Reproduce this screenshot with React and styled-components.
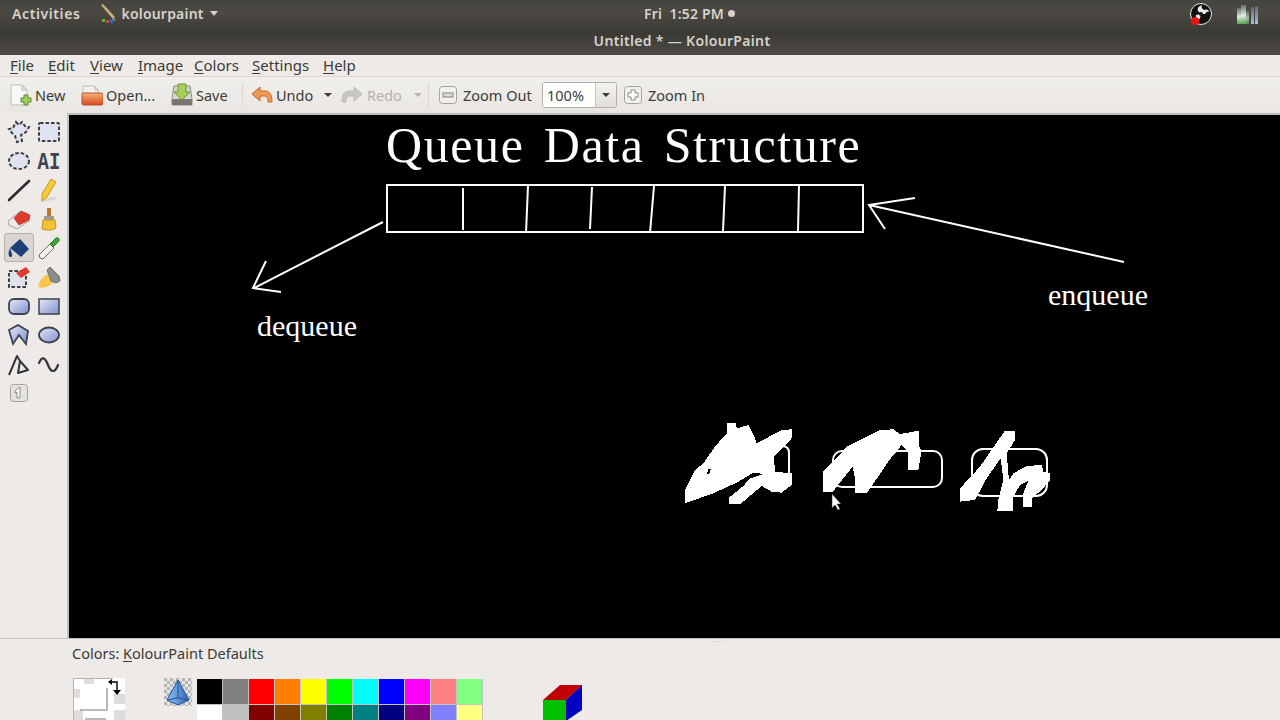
import React from 'react';
import styled, { createGlobalStyle } from 'styled-components';

const GlobalStyle = createGlobalStyle`
  html, body { margin: 0; padding: 0; background: #edeae7; }
  * { box-sizing: border-box; }
`;

const uiFont = `"Noto Sans", "Open Sans", sans-serif`;

const Page = styled.div`
  width: 1280px;
  height: 720px;
  overflow: hidden;
  display: flex;
  flex-direction: column;
  font-family: ${uiFont};
  background: #edeae7;
  color: #3c3b37;
`;

const Chrome = styled.div`
  height: 55px;
  flex: none;
  background: linear-gradient(#45433e 0, #4c4943 12px, #3f3d38 28px, #3c3a35 34px, #4d4a44 55px);
  color: #d6d3cc;
  font-weight: 600;
`;

const TopBar = styled.div`
  height: 27px;
  display: grid;
  grid-template-columns: 644px auto 1fr;
  align-items: center;
  font-size: 14px;
  letter-spacing: 0.15px;
`;

const TopLeft = styled.div`
  display: flex;
  align-items: center;
  padding-left: 12px;
`;

const Activities = styled.span`
  letter-spacing: 0.6px;
`;

const AppMenu = styled.div`
  display: flex;
  align-items: center;
  gap: 3px;
  margin-left: 20px;
  & > span:nth-child(2) { letter-spacing: 0.2px; }
`;

const Caret = styled.span`
  width: 0;
  height: 0;
  margin-left: ${p => p.$left ?? 3}px;
  border-left: 4.5px solid transparent;
  border-right: 4.5px solid transparent;
  border-top: ${p => p.$h || 5}px solid ${p => p.$color || '#d6d3cc'};
`;

const Clock = styled.div`
  display: flex;
  align-items: center;
  gap: 4px;
  white-space: pre;
`;

const Dot = styled.span`
  width: 7px;
  height: 7px;
  border-radius: 50%;
  background: #d6d3cc;
`;

const Tray = styled.div`
  display: flex;
  justify-content: flex-end;
  align-items: center;
  gap: 24px;
  padding-right: 21px;
`;

const LevelsSvg = styled.svg`
  filter: blur(0.5px);
`;

const WindowTitle = styled.div`
  height: 28px;
  padding: 0 0 1px 84px;
  display: flex;
  align-items: center;
  justify-content: center;
  font-size: 14px;
  letter-spacing: 0.33px;
`;

const MenuBar = styled.div`
  height: 22px;
  flex: none;
  display: flex;
  align-items: center;
  padding: 0 0 2px 10px;
  font-size: 15px;
  border-bottom: 1px solid #d8d5d1;
`;

const MenuItem = styled.span`
  width: ${p => p.$width}px;
  flex: none;
`;

const Mnemonic = styled.span`
  text-decoration: underline;
  text-underline-offset: 2px;
`;

const ToolBar = styled.div`
  height: 36px;
  flex: none;
  display: flex;
  align-items: center;
  padding-left: 10px;
  font-size: 14.5px;
  background: linear-gradient(#f1efec, #e9e6e2);
`;

const ToolButton = styled.div`
  width: ${p => p.$width}px;
  flex: none;
  display: flex;
  align-items: center;
  gap: ${p => p.$gap ?? 3}px;
  color: ${p => (p.$disabled ? '#b5b2ae' : '#3c3b37')};
`;

const Separator = styled.div`
  width: 1px;
  height: 24px;
  flex: none;
  margin-right: ${p => p.$right}px;
  background: #d8d5d0;
`;

const ZoomCombo = styled.div`
  width: 75px;
  height: 26px;
  flex: none;
  display: grid;
  grid-template-columns: 53px 1fr;
  align-items: stretch;
  margin-right: 7px;
  border: 1px solid #b3afa9;
  border-radius: 3px;
  overflow: hidden;
`;

const ZoomValue = styled.div`
  display: flex;
  align-items: center;
  padding-left: 4px;
  background: #fff;
  border-right: 1px solid #c8c5c0;
`;

const ZoomArrow = styled.div`
  display: flex;
  align-items: center;
  justify-content: center;
  background: linear-gradient(#f4f2ef, #e2dfdb);
  & > span { margin: 0; }
`;

const Body = styled.div`
  flex: 1;
  min-height: 0;
  display: flex;
  border-top: 2px solid #c3c0bc;
`;

const ToolBox = styled.div`
  width: 69px;
  flex: none;
  margin-top: -2px;
  padding: 4px 0 0 4px;
  background: #edeae7;
  border-right: 2px solid #c3c0bc;
  display: grid;
  grid-template-columns: 30px 30px;
  grid-auto-rows: 29px;
  align-content: start;
`;

const ToolCell = styled.div`
  display: flex;
  align-items: center;
  justify-content: center;
  border-radius: 3px;
  ${p => p.$active && `
    background: #d9d6d2;
    border: 1px solid #b5b2ad;
  `}
`;

const SharedDefs = styled.svg`
  position: absolute;
`;

const Stage = styled.div`
  flex: 1;
  position: relative;
  background: #000;
  overflow: hidden;
`;

const Drawing = styled.svg`
  display: block;
  width: 100%;
  height: 100%;
`;

const CanvasLabel = styled.div`
  position: absolute;
  left: ${p => p.$x}px;
  top: ${p => p.$y}px;
  color: #fff;
  font-family: "Liberation Serif", "DejaVu Serif", serif;
  font-size: ${p => p.$size}px;
  line-height: 1;
  white-space: pre;
  letter-spacing: ${p => p.$track || 0}px;
  word-spacing: ${p => p.$words || 0}px;
`;

const ColorPanel = styled.div`
  height: 82px;
  flex: none;
  padding-left: 69px;
  background: #edeae7;
  border-top: 1px solid #c3c0bc;
  position: relative;
`;

const GripDots = styled.div`
  position: absolute;
  left: 708px;
  top: 1px;
  width: 18px;
  height: 3px;
  background-image: radial-gradient(#c9c6c1 0.8px, transparent 1px);
  background-size: 3px 3px;
`;

const PanelLabel = styled.div`
  padding: 4px 0 0 3px;
  height: 39px;
  font-size: 14.5px;
`;

const PaletteRow = styled.div`
  display: flex;
  align-items: flex-start;
`;

const ColorWell = styled.svg`
  flex: none;
  margin: 0 39px 0 4px;
`;

const ColorCone = styled.svg`
  flex: none;
`;

const Swatches = styled.div`
  flex: none;
  width: 286px;
  margin: 1px 60px 0 5px;
  display: grid;
  grid-template-columns: repeat(11, 26px);
  grid-auto-rows: 26px;
  background: #bdbab6;
`;

const Swatch = styled.div`
  background: ${p => p.$color};
  border-right: 1px solid #c5c3c0;
  border-bottom: 1px solid #c5c3c0;
`;

const ColorCube = styled.svg`
  flex: none;
  margin-top: 7px;
`;

const Ul = ({ children, rest, width }) => (
  <MenuItem $width={width}><Mnemonic>{children}</Mnemonic>{rest}</MenuItem>
);

const NewIcon = () => (
  <svg width="22" height="24" viewBox="0 0 22 24">
    <path d="M1 2h11l5 5v15H1z" fill="#f8f8f6" stroke="#bdbcb8" />
    <path d="M12 2v5h5z" fill="#dcdcd8" stroke="#bdbcb8" />
    <path d="M11 15h3v-3h4v3h3v4h-3v3h-4v-3h-3z" fill="#9ccb5f" stroke="#5f8c2e" />
  </svg>
);

const OpenIcon = () => (
  <svg width="22" height="24" viewBox="0 0 22 24">
    <path d="M2 3h11l4 4v4H2z" fill="#f2f1ee" stroke="#c0bdb8" />
    <path d="M14 3v4h4" fill="none" stroke="#c0bdb8" />
    <rect x="1" y="10" width="21" height="12" rx="1.5" fill="url(#openFill)" stroke="#b9512a" />
    <defs>
      <linearGradient id="openFill" x1="0" y1="0" x2="0" y2="1">
        <stop offset="0" stopColor="#f6b27a" />
        <stop offset="1" stopColor="#d9481c" />
      </linearGradient>
    </defs>
  </svg>
);

const SaveIcon = () => (
  <svg width="22" height="24" viewBox="0 0 22 24">
    <path d="M3 3h16l2 13v6H1v-6z" fill="#d6d5d0" stroke="#8d8c88" />
    <rect x="1" y="16" width="20" height="6" rx="1" fill="#77766f" />
    <path d="M7 1h8v8h4l-8 8-8-8h4z" fill="#a6cf5b" stroke="#6d9a2c" />
  </svg>
);

const UndoIcon = () => (
  <svg width="22" height="20" viewBox="0 0 22 20">
    <path d="M1 9 9 2v4h5c5 0 7 4 7 11h-4c0-4-1-6-4-6H9v5z" fill="#ee9a55" stroke="#c9662a" />
  </svg>
);

const RedoIcon = () => (
  <svg width="22" height="20" viewBox="0 0 22 20">
    <path d="M21 9 13 2v4H8c-5 0-7 4-7 11h4c0-4 1-6 4-6h4v5z" fill="#c9c7c3" stroke="#bdbbb7" />
  </svg>
);

const ZoomIcon = ({ plus }) => (
  <svg width="18" height="18" viewBox="0 0 18 18">
    <rect x="0.5" y="0.5" width="17" height="17" rx="3" fill="#f2f0ed" stroke="#a5a29d" />
    {plus
      ? <path d="M7 4h4v3h3v4h-3v3H7v-3H4V7h3z" fill="#fff" stroke="#8a8782" />
      : <rect x="4" y="7" width="10" height="4" fill="#dcdad6" stroke="#8a8782" />}
  </svg>
);

const PaintBrushLogo = () => (
  <svg width="18" height="20" viewBox="0 0 18 20">
    <path d="M1 1 3 0l12 13-2 2z" fill="#c9b184" />
    <path d="M13 13l3 3-2 1-2-2z" fill="#8c8a85" />
    <rect x="2" y="15" width="3" height="3" fill="#62b043" />
    <rect x="6" y="16" width="3" height="3" fill="#c84a3c" />
    <rect x="10" y="16" width="3" height="3" fill="#3d67c9" />
  </svg>
);

const ObsIcon = () => (
  <svg width="24" height="24" viewBox="0 0 24 24">
    <circle cx="12" cy="12" r="10.5" fill="#111" stroke="#e8e8e8" strokeWidth="1" />
    <path d="M12 12 9 9C8 6 10 4 13 3c-1 2 0 4 2 5 2-1 4-1 6 2-2-1-4 0-5 2zM12 12l-1 4c-1 2-3 3-6 2 2-1 2-3 2-5z" fill="#e8e8e8" />
    <circle cx="12" cy="12" r="2" fill="#111" />
    <circle cx="6" cy="19" r="4" fill="#f01010" />
  </svg>
);

const LevelsIcon = () => (
  <LevelsSvg width="22" height="20" viewBox="0 0 22 20">
    <defs>
      <linearGradient id="lvA" x1="0" y1="0" x2="0" y2="1">
        <stop offset="0" stopColor="#6b6e68" />
        <stop offset="0.55" stopColor="#dcebe0" />
        <stop offset="1" stopColor="#57a650" />
      </linearGradient>
      <linearGradient id="lvB" x1="0" y1="0" x2="0" y2="1">
        <stop offset="0" stopColor="#62656a" />
        <stop offset="1" stopColor="#a9c2dc" />
      </linearGradient>
    </defs>
    <rect x="0" y="4" width="4" height="16" fill="url(#lvA)" />
    <rect x="4" y="1" width="5" height="19" fill="url(#lvA)" />
    <rect x="9" y="7" width="3" height="13" fill="url(#lvA)" opacity="0.7" />
    <rect x="14" y="3" width="3" height="17" fill="url(#lvB)" />
    <rect x="18" y="2" width="3" height="18" fill="url(#lvB)" />
  </LevelsSvg>
);

const dash = { fill: '#dfe2f0', stroke: '#3d3f44', strokeWidth: 2, strokeDasharray: '3.5 2' };
const shape = { fill: 'url(#toolFill)', stroke: '#3d4250', strokeWidth: 1.8 };

const toolIcons = [
  <path d="M9 2l3 3 3-3 3 4 4 1-3 5-5 3 1 6-5 1-2-6-3-3-3-4 4-1z" {...dash} />,
  <rect x="2" y="3" width="20" height="18" rx="1" {...dash} />,
  <ellipse cx="12" cy="12" rx="10" ry="8" {...dash} />,
  <text
    transform="translate(0.5 20) scale(1 1.3)"
    fontSize="19"
    fontWeight="700"
    fontFamily="'Liberation Mono', monospace"
    fill="#3f444a"
  >
    AI
  </text>,
  <path d="M2 22 22 3" stroke="#2d2d30" strokeWidth="2.6" strokeLinecap="round" />,
  <g>
    <path d="M4 23l15-3" stroke="#dcd9d5" strokeWidth="3" />
    <path d="M14 1l5 3-9 15-5 4 0-7z" fill="#f5c93c" stroke="#c79a1c" />
  </g>,
  <g>
    <path d="M1 14 12 5l10 5v4L10 22l-8-4z" fill="#ecebe8" stroke="#a9a6a2" />
    <path d="M7 11 14 4l9 4-1 5-10 5z" fill="#de3b2b" stroke="#b92a1e" strokeWidth="0.7" />
  </g>,
  <g>
    <path d="M10 1h4v9h-4z" fill="#b97a2c" />
    <rect x="7" y="9" width="10" height="4" fill="#9f9b92" />
    <path d="M6 13h12l1 8c-4 3-11 2-14 1z" fill="#f4c232" stroke="#c7901c" />
  </g>,
  <g>
    <path d="M3 12 13 3l9 10-8 8-6-5z" fill="#1e3f78" />
    <path d="M3 12c-1 3-2 5-1 8 1 2 4 1 3-2z" fill="#1e3f78" />
  </g>,
  <g>
    <path d="M3 22l-1-3L13 8l4 4L6 23z" fill="#f1f0ed" stroke="#6b6b6b" />
    <path d="M13 8l6-6c2-1 4 1 3 3l-6 6z" fill="#3aa63c" stroke="#24752a" />
  </g>,
  <g>
    <rect x="2" y="6" width="17" height="16" {...dash} fill="#dfe2ea" />
    <path d="M9 8l10-6 4 5-9 6z" fill="#e23a2c" />
  </g>,
  <g>
    <path d="M1 22c1-6 5-11 10-13l6 7c-3 5-10 8-16 6z" fill="#f8c64a" />
    <path d="M10 5l3-3 9 9 1 5-4 2-5-2z" fill="#8b8d8e" stroke="#6f7172" />
  </g>,
  <rect x="2" y="5" width="20" height="15" rx="5" {...shape} />,
  <rect x="2" y="5" width="20" height="15" {...shape} strokeWidth="1.5" />,
  <path d="M2 7l9-5 10 6-2 13-7-9-6 9z" {...shape} />,
  <ellipse cx="12" cy="12" rx="10" ry="7.5" {...shape} />,
  <path d="M2 23 10 4l3 5-2 12 10-3-8-9" fill="none" stroke="#33363c" strokeWidth="2" strokeLinejoin="round" />,
  <path d="M2 11c3-7 6-6 9 2s7 8 10 0" fill="none" stroke="#33363c" strokeWidth="2.2" strokeLinecap="round" />,
];

const ToolIcon = ({ children }) => (
  <svg width="24" height="24" viewBox="0 0 24 24">{children}</svg>
);

const row1 = ['#000000', '#808080', '#ff0000', '#ff8000', '#ffff00', '#00ff00', '#00ffff', '#0000ff', '#ff00ff', '#ff8080', '#80ff80'];
const row2 = ['#ffffff', '#c0c0c0', '#800000', '#804000', '#808000', '#008000', '#008080', '#000080', '#800080', '#8080ff', '#ffff80'];

const scribbles = [
  'M45 240 75 180 100 160 135 110 170 70 172 38 197 38 200 55 235 45 255 85 260 100 335 60 365 58 365 85 312 140 315 185 365 190 365 225 335 248 305 245 275 228 210 283 178 283 178 262 220 228 240 205 282 192 250 188 200 218 130 250 45 280Z M115 178 122 178 118 192 110 192Z',
  'M460 185 495 150 530 110 570 90 630 60 670 58 690 72 748 62 748 110 755 122 745 180 715 180 715 125 695 105 660 148 590 250 555 250 555 205 548 170 500 230 490 245 460 245Z',
  'M870 235 930 170 985 90 1005 62 1035 62 1035 90 1010 130 1017 210 1030 190 1070 168 1115 165 1120 185 1140 190 1140 210 1115 240 1085 265 1085 292 1060 292 1060 250 1075 212 1050 225 1030 260 1030 303 982 303 985 270 1000 210 992 145 950 205 915 270 870 275Z',
];

const App = () => (
  <Page>
    <GlobalStyle />
    <Chrome>
      <TopBar>
        <TopLeft>
          <Activities>Activities</Activities>
          <AppMenu>
            <PaintBrushLogo />
            <span>kolourpaint</span>
            <Caret />
          </AppMenu>
        </TopLeft>
        <Clock>
          <span>Fri  1:52 PM</span>
          <Dot />
        </Clock>
        <Tray>
          <ObsIcon />
          <LevelsIcon />
        </Tray>
      </TopBar>
      <WindowTitle>Untitled * — KolourPaint</WindowTitle>
    </Chrome>

    <MenuBar>
      <Ul width={38} rest="ile">F</Ul>
      <Ul width={42} rest="dit">E</Ul>
      <Ul width={48} rest="iew">V</Ul>
      <Ul width={56} rest="mage">I</Ul>
      <Ul width={58} rest="olors">C</Ul>
      <Ul width={71} rest="ettings">S</Ul>
      <Ul width={40} rest="elp">H</Ul>
    </MenuBar>

    <ToolBar>
      <ToolButton $width={71}><NewIcon /><span>New</span></ToolButton>
      <ToolButton $width={90}><OpenIcon /><span>Open...</span></ToolButton>
      <ToolButton $width={71}><SaveIcon /><span>Save</span></ToolButton>
      <Separator $right={8} />
      <ToolButton $width={90}>
        <UndoIcon /><span>Undo</span><Caret $color="#3c3b37" $h={4} $left={8} />
      </ToolButton>
      <ToolButton $width={87} $disabled $gap={4}>
        <RedoIcon /><span>Redo</span><Caret $color="#b5b2ae" $h={4} $left={8} />
      </ToolButton>
      <Separator $right={10} />
      <ToolButton $width={103} $gap={6}><ZoomIcon /><span>Zoom Out</span></ToolButton>
      <ZoomCombo>
        <ZoomValue>100%</ZoomValue>
        <ZoomArrow><Caret $color="#3c3b37" $h={4} /></ZoomArrow>
      </ZoomCombo>
      <ToolButton $width={90} $gap={6}><ZoomIcon plus /><span>Zoom In</span></ToolButton>
    </ToolBar>

    <Body>
      <ToolBox>
        <SharedDefs width="0" height="0">
          <defs>
            <linearGradient id="toolFill" x1="0" y1="0" x2="1" y2="1">
              <stop offset="0" stopColor="#e6e8f6" />
              <stop offset="1" stopColor="#7f90cf" />
            </linearGradient>
          </defs>
        </SharedDefs>
        {toolIcons.map((icon, i) => (
          <ToolCell key={i} $active={i === 8}><ToolIcon>{icon}</ToolIcon></ToolCell>
        ))}
        <ToolCell>
          <svg width="18" height="18" viewBox="0 0 18 18">
            <rect x="0.5" y="0.5" width="17" height="17" rx="3" fill="#e4e2df" stroke="#a5a29d" />
            <path d="M7 5l3-2v11H7V8L5 9V7z" fill="#fff" stroke="#8a8782" />
          </svg>
        </ToolCell>
      </ToolBox>

      <Stage>
        {/* page coordinates: viewBox starts at the stage origin (69, 115) */}
        <Drawing viewBox="69 115 1211 523" preserveAspectRatio="xMinYMin">
          <g fill="none" stroke="#fff">
            <rect x="387" y="185" width="476" height="47" strokeWidth="2" />
            <g strokeWidth="2">
              <path d="M463 188V230M528 186 526 233M592 187 590 229M654 186 650 233M725 186 723 231M799 186 798 231" />
              <path d="M383 222 254 288M266 261 253 288 281 292" />
              <path d="M1124 262 869 205M915 198 869 205 885 229" />
              <path d="M760 446H782Q789 446 789 453V486H770" />
              <rect x="833" y="451" width="109" height="36" rx="9" />
              <rect x="972" y="449" width="75" height="47" rx="11" />
            </g>
          </g>
          <g transform="translate(670 410) scale(0.33333)" fill="#fff" fillRule="evenodd" shapeRendering="crispEdges">
            {scribbles.map(d => <path key={d} d={d} />)}
          </g>
          <path d="M832 494v14l3-3 3 5 2-1-3-5h4z" fill="#fff" stroke="#333" strokeWidth="0.5" />
        </Drawing>
        <CanvasLabel $x={317} $y={5} $size={50} $track={1.6} $words={-4.5}>Queue  Data  Structure</CanvasLabel>
        <CanvasLabel $x={188} $y={196} $size={30}>dequeue</CanvasLabel>
        <CanvasLabel $x={979} $y={165} $size={30}>enqueue</CanvasLabel>
      </Stage>
    </Body>

    <ColorPanel>
      <GripDots />
      <PanelLabel>Colors: <Mnemonic>K</Mnemonic>olourPaint Defaults</PanelLabel>
      <PaletteRow>
        <ColorWell width="52" height="42" viewBox="0 0 52 42">
          <rect width="52" height="42" fill="#fff" />
          <g fill="#dfdddb">
            <rect x="11" y="1" width="10" height="5" />
            <rect x="0" y="11" width="7" height="9" />
            <rect x="41" y="16" width="11" height="10" />
            <rect x="0" y="32" width="10" height="10" />
            <rect x="41" y="32" width="11" height="10" />
          </g>
          <path d="M0 .5H40M.5 0V42" stroke="#b5b3b0" />
          <path d="M7 32H34V10" fill="none" stroke="#a7a5a1" strokeWidth="1.6" />
          <path d="M12 41H33" fill="none" stroke="#a7a5a1" strokeWidth="1.6" />
          <path d="M37 4h7v10" fill="none" stroke="#000" strokeWidth="1.4" />
          <path d="M39 1l-4 3 4 3zM40 12h8l-4 5z" fill="#000" />
        </ColorWell>
        <ColorCone width="28" height="28" viewBox="0 0 28 28">
          <defs>
            <pattern id="pyrChecks" width="6" height="6" patternUnits="userSpaceOnUse">
              <rect width="6" height="6" fill="#e8e6e4" />
              <rect width="3" height="3" fill="#b8b6b4" />
              <rect x="3" y="3" width="3" height="3" fill="#b8b6b4" />
            </pattern>
            <linearGradient id="pyrFill" x1="0" y1="0" x2="1" y2="0">
              <stop offset="0" stopColor="#8fc0f0" />
              <stop offset="1" stopColor="#2f68c0" />
            </linearGradient>
          </defs>
          <rect width="28" height="28" fill="url(#pyrChecks)" />
          <path d="M14 2 3 22l11 5 11-5z" fill="url(#pyrFill)" stroke="#24539c" />
          <path d="M14 2v18M3 22l11-2 11 2" fill="none" stroke="#24539c" />
        </ColorCone>
        <Swatches>
          {[...row1, ...row2].map((c, i) => <Swatch key={i} $color={c} />)}
        </Swatches>
        <ColorCube width="40" height="36" viewBox="0 0 40 36">
          <path d="M0 15 17 0H39L23 15z" fill="#c00000" />
          <rect x="0" y="15" width="23" height="21" fill="#00c000" />
          <path d="M23 15 39 0V25L23 36z" fill="#0000c0" />
        </ColorCube>
      </PaletteRow>
    </ColorPanel>
  </Page>
);

export default App;
